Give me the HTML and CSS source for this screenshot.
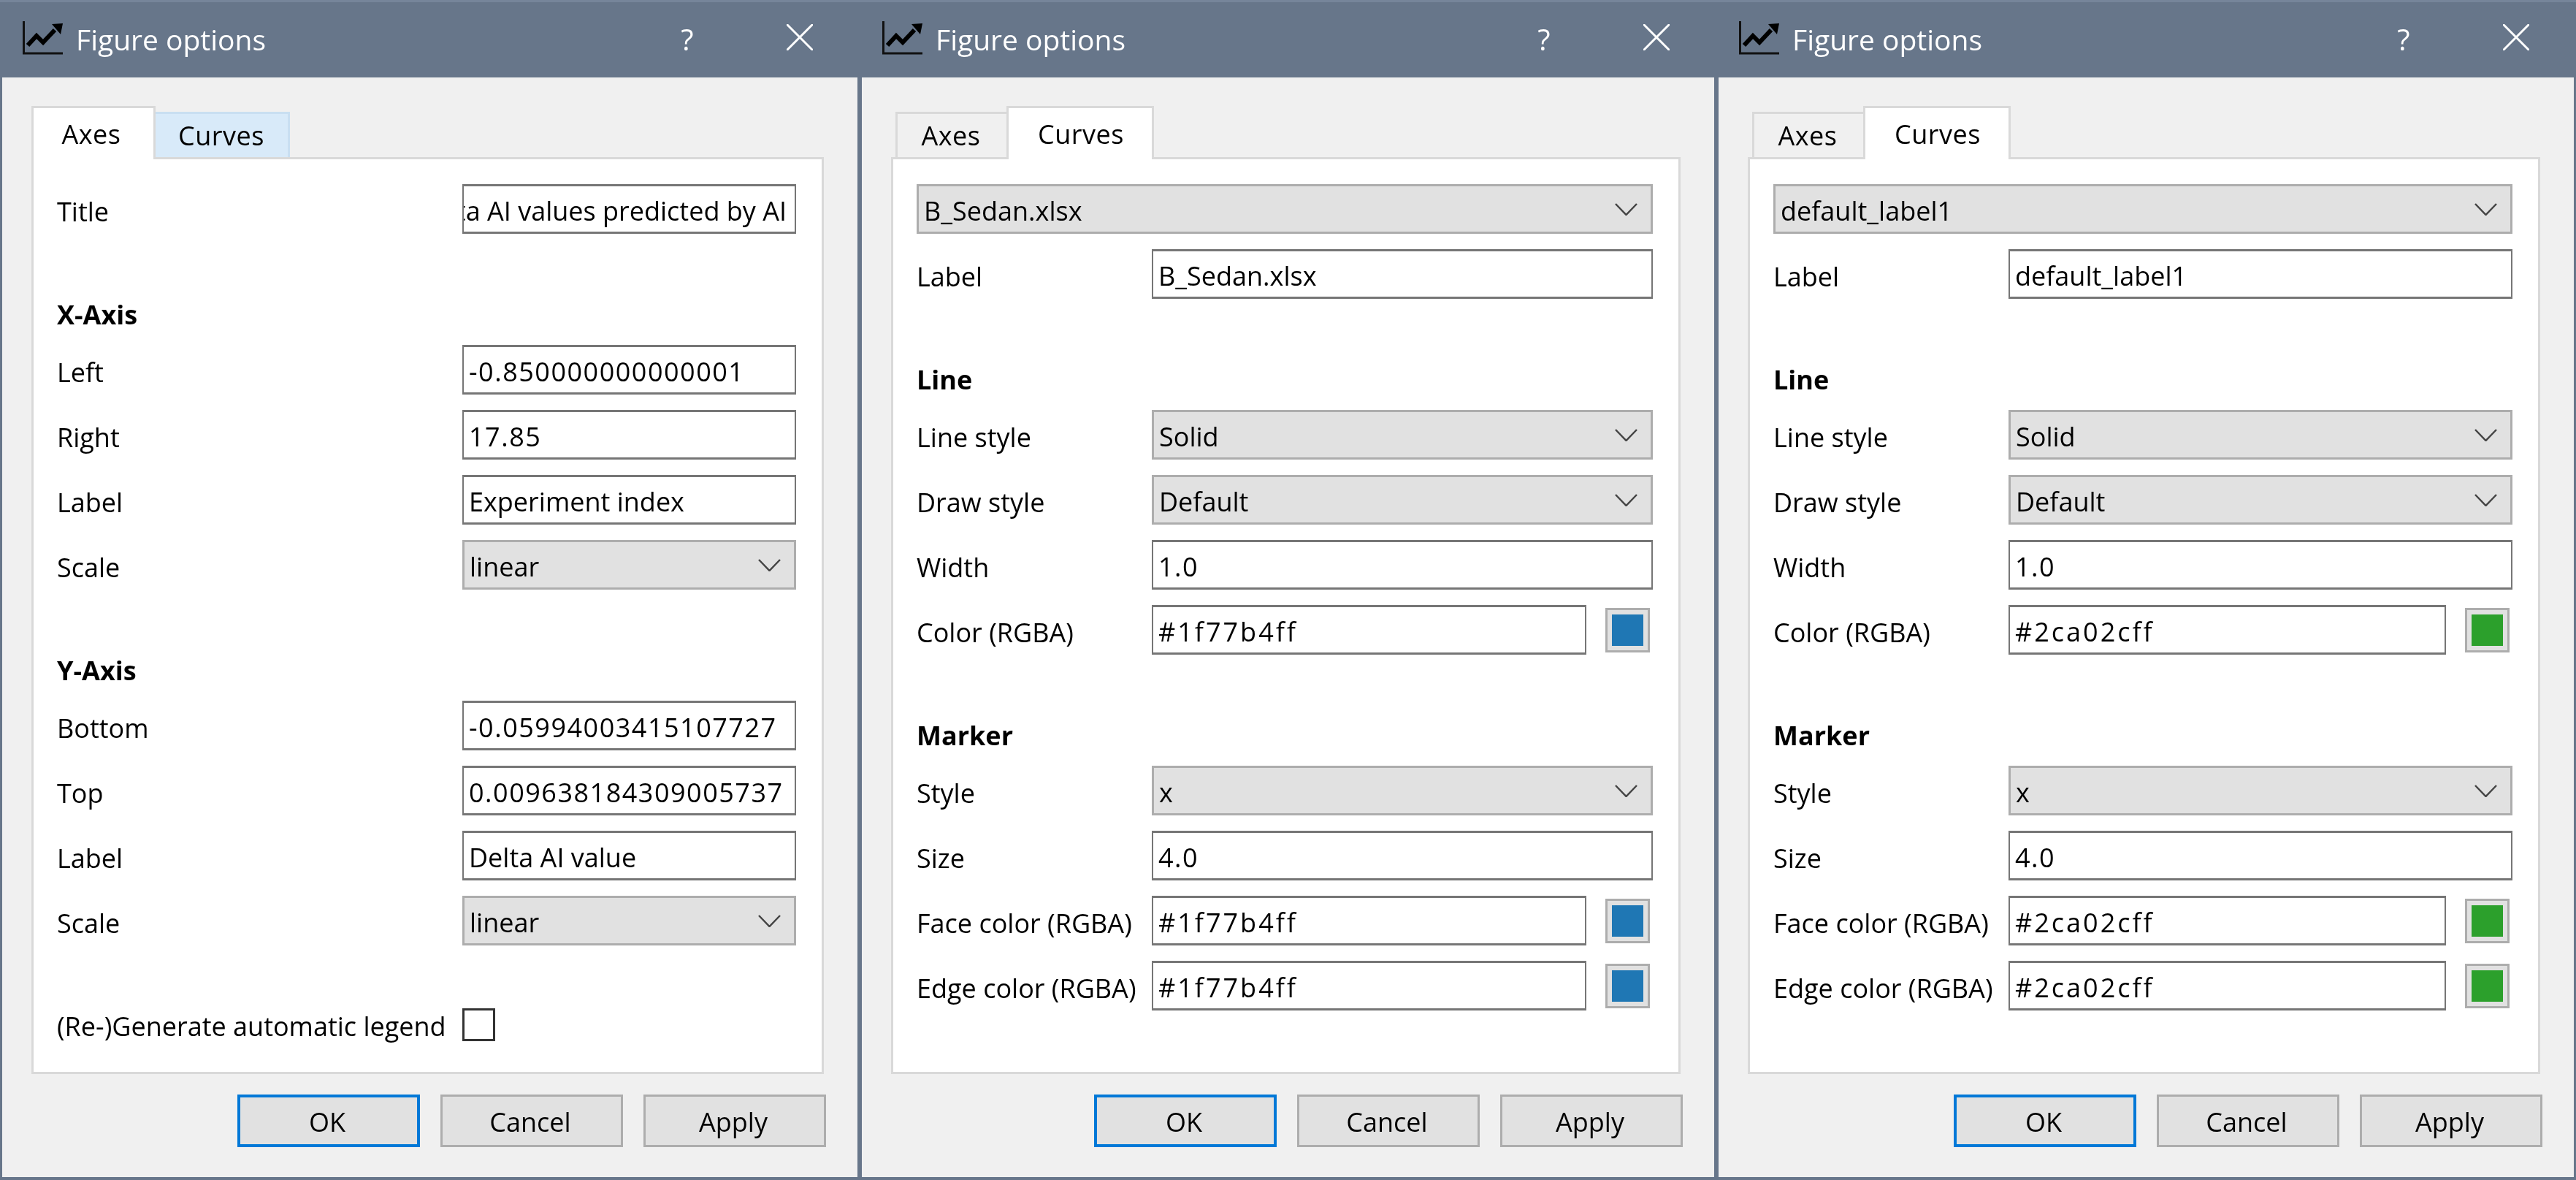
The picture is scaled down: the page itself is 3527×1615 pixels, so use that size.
FILE: index.html
```html
<!DOCTYPE html>
<html lang="en">
<head>
  <meta charset="UTF-8" />
  <title>Figure options</title>
  <link rel="stylesheet" href="styles.css">
</head>
<body>

  <div class="desktop">

    <!-- Axes tab -->
    <div class="dialog">
      <div class="titlebar">
        <svg class="app-icon" viewBox="0 0 55 46"><path class="icon-axes" d="M1.5 0V44H55"/><path class="icon-line" d="M7 33L19 20L28 29L44 12"/><path d="M40 4L55 3L52 18Z"/></svg>
        <span class="title-text">Figure options</span>
        <span class="help">?</span>
        <svg class="close" viewBox="0 0 36 36"><path d="M1 1L35 35M35 1L1 35"/></svg>
      </div>
      <div class="content">
        <div class="tabs">
          <div class="tab tab-axes active">Axes</div>
          <div class="tab tab-curves hover">Curves</div>
        </div>
        <div class="pane">
          <div class="row row-axes"><span class="label">Title</span><div class="field clipped"><span>Delta AI values predicted by AI</span></div></div>

          <div class="section">X-Axis</div>
          <div class="row row-axes"><span class="label">Left</span><div class="field num">-0.850000000000001</div></div>
          <div class="row row-axes"><span class="label">Right</span><div class="field num">17.85</div></div>
          <div class="row row-axes"><span class="label">Label</span><div class="field">Experiment index</div></div>
          <div class="row row-axes"><span class="label">Scale</span><div class="combo">linear<svg class="chevron" viewBox="0 0 31 17"><path d="M1 1L15.5 16L30 1"/></svg></div></div>

          <div class="section">Y-Axis</div>
          <div class="row row-axes"><span class="label">Bottom</span><div class="field num">-0.05994003415107727</div></div>
          <div class="row row-axes"><span class="label">Top</span><div class="field num">0.009638184309005737</div></div>
          <div class="row row-axes"><span class="label">Label</span><div class="field">Delta AI value</div></div>
          <div class="row row-axes"><span class="label">Scale</span><div class="combo">linear<svg class="chevron" viewBox="0 0 31 17"><path d="M1 1L15.5 16L30 1"/></svg></div></div>

          <div class="legend-row"><span class="legend-label">(Re-)Generate automatic legend</span><div class="checkbox"></div></div>
        </div>
        <div class="buttons">
          <div class="btn default">OK</div>
          <div class="btn">Cancel</div>
          <div class="btn">Apply</div>
        </div>
      </div>
    </div>

    <!-- Curves tab, blue line -->
    <div class="dialog">
      <div class="titlebar">
        <svg class="app-icon" viewBox="0 0 55 46"><path class="icon-axes" d="M1.5 0V44H55"/><path class="icon-line" d="M7 33L19 20L28 29L44 12"/><path d="M40 4L55 3L52 18Z"/></svg>
        <span class="title-text">Figure options</span>
        <span class="help">?</span>
        <svg class="close" viewBox="0 0 36 36"><path d="M1 1L35 35M35 1L1 35"/></svg>
      </div>
      <div class="content">
        <div class="tabs">
          <div class="tab tab-axes">Axes</div>
          <div class="tab tab-curves active">Curves</div>
        </div>
        <div class="pane">
          <div class="row"><div class="combo">B_Sedan.xlsx<svg class="chevron" viewBox="0 0 31 17"><path d="M1 1L15.5 16L30 1"/></svg></div></div>
          <div class="row"><span class="label">Label</span><div class="field">B_Sedan.xlsx</div></div>

          <div class="section">Line</div>
          <div class="row"><span class="label">Line style</span><div class="combo">Solid<svg class="chevron" viewBox="0 0 31 17"><path d="M1 1L15.5 16L30 1"/></svg></div></div>
          <div class="row"><span class="label">Draw style</span><div class="combo">Default<svg class="chevron" viewBox="0 0 31 17"><path d="M1 1L15.5 16L30 1"/></svg></div></div>
          <div class="row"><span class="label">Width</span><div class="field num">1.0</div></div>
          <div class="row"><span class="label">Color (RGBA)</span><div class="field hex">#1f77b4ff</div><div class="swatch"><i class="blue"></i></div></div>

          <div class="section">Marker</div>
          <div class="row"><span class="label">Style</span><div class="combo">x<svg class="chevron" viewBox="0 0 31 17"><path d="M1 1L15.5 16L30 1"/></svg></div></div>
          <div class="row"><span class="label">Size</span><div class="field num">4.0</div></div>
          <div class="row"><span class="label">Face color (RGBA)</span><div class="field hex">#1f77b4ff</div><div class="swatch"><i class="blue"></i></div></div>
          <div class="row"><span class="label">Edge color (RGBA)</span><div class="field hex">#1f77b4ff</div><div class="swatch"><i class="blue"></i></div></div>
        </div>
        <div class="buttons">
          <div class="btn default">OK</div>
          <div class="btn">Cancel</div>
          <div class="btn">Apply</div>
        </div>
      </div>
    </div>

    <!-- Curves tab, green line -->
    <div class="dialog">
      <div class="titlebar">
        <svg class="app-icon" viewBox="0 0 55 46"><path class="icon-axes" d="M1.5 0V44H55"/><path class="icon-line" d="M7 33L19 20L28 29L44 12"/><path d="M40 4L55 3L52 18Z"/></svg>
        <span class="title-text">Figure options</span>
        <span class="help">?</span>
        <svg class="close" viewBox="0 0 36 36"><path d="M1 1L35 35M35 1L1 35"/></svg>
      </div>
      <div class="content">
        <div class="tabs">
          <div class="tab tab-axes">Axes</div>
          <div class="tab tab-curves active">Curves</div>
        </div>
        <div class="pane">
          <div class="row"><div class="combo">default_label1<svg class="chevron" viewBox="0 0 31 17"><path d="M1 1L15.5 16L30 1"/></svg></div></div>
          <div class="row"><span class="label">Label</span><div class="field">default_label1</div></div>

          <div class="section">Line</div>
          <div class="row"><span class="label">Line style</span><div class="combo">Solid<svg class="chevron" viewBox="0 0 31 17"><path d="M1 1L15.5 16L30 1"/></svg></div></div>
          <div class="row"><span class="label">Draw style</span><div class="combo">Default<svg class="chevron" viewBox="0 0 31 17"><path d="M1 1L15.5 16L30 1"/></svg></div></div>
          <div class="row"><span class="label">Width</span><div class="field num">1.0</div></div>
          <div class="row"><span class="label">Color (RGBA)</span><div class="field hex">#2ca02cff</div><div class="swatch"><i class="green"></i></div></div>

          <div class="section">Marker</div>
          <div class="row"><span class="label">Style</span><div class="combo">x<svg class="chevron" viewBox="0 0 31 17"><path d="M1 1L15.5 16L30 1"/></svg></div></div>
          <div class="row"><span class="label">Size</span><div class="field num">4.0</div></div>
          <div class="row"><span class="label">Face color (RGBA)</span><div class="field hex">#2ca02cff</div><div class="swatch"><i class="green"></i></div></div>
          <div class="row"><span class="label">Edge color (RGBA)</span><div class="field hex">#2ca02cff</div><div class="swatch"><i class="green"></i></div></div>
        </div>
        <div class="buttons">
          <div class="btn default">OK</div>
          <div class="btn">Cancel</div>
          <div class="btn">Apply</div>
        </div>
      </div>
    </div>

  </div>

</body>
</html>
```

FILE: styles.css
```css
* {
  box-sizing: border-box;
}

body {
  margin: 0;
  background: #67768a;
  font-family: 'Open Sans', 'Noto Sans', sans-serif;
  font-size: 36px;
  color: #000;
  overflow: hidden;
}

.desktop {
  display: grid;
  grid-template-columns: 1177px 1173px 1177px;
  height: 1615px;
  filter: blur(0.6px);
}

.dialog {
  display: flex;
  flex-direction: column;
  background: #67768a;
  padding: 0 3px 4px 3px;
}

.titlebar {
  display: flex;
  align-items: center;
  height: 106px;
  flex: none;
  margin: 0 -3px;
  padding-left: 31px;
  border-top: 3px solid #76859a;
  color: #fff;
}

.app-icon {
  width: 55px;
  height: 46px;
  margin-top: -5px;
  margin-right: 18px;
  flex: none;
}

.icon-axes {
  fill: none;
  stroke: #111;
  stroke-width: 3;
}

.icon-line {
  fill: none;
  stroke: #000;
  stroke-width: 6;
}

.title-text {
  font-size: 39px;
  margin-top: -3px;
  flex: 1;
}

.help {
  font-size: 40px;
  width: 36px;
  text-align: center;
  margin-right: 118px;
  margin-top: -2px;
}

.close {
  width: 36px;
  height: 36px;
  margin-right: 64px;
  margin-top: -8px;
  fill: none;
  stroke: #fff;
  stroke-width: 3;
  stroke-linecap: round;
}

.content {
  flex: 1;
  background: #f0f0f0;
  padding: 39px 42px 0 40px;
  display: flex;
  flex-direction: column;
}

.tabs {
  display: flex;
  align-items: flex-end;
  height: 70px;
  padding-left: 6px;
  margin-right: 4px;
}

.tab {
  height: 62px;
  display: flex;
  align-items: center;
  justify-content: center;
  background: #f0f0f0;
  border: 3px solid #d9d9d9;
  border-bottom: none;
}

.tab-axes {
  width: 158px;
  padding-right: 6px;
  letter-spacing: 0.5px;
}

.tab-curves {
  width: 190px;
  padding-left: 2px;
  letter-spacing: 0.5px;
}

.tab.hover {
  background: #d8eaf9;
  border-color: #c9dff1;
}

.tab.active {
  position: relative;
  z-index: 1;
  height: 73px;
  margin: 0 -6px -3px;
  background: #fff;
}

.tab-axes.active {
  width: 170px;
}

.tab-curves.active {
  width: 202px;
}

.pane {
  height: 1255px;
  margin-right: 4px;
  background: #fff;
  border: 3px solid #d9d9d9;
  padding: 34px 35px 0 32px;
  display: flex;
  flex-direction: column;
}

.row {
  display: flex;
  align-items: center;
  height: 68px;
  flex: none;
}

.row + .row {
  margin-top: 21px;
}

.label {
  width: 322px;
  flex: none;
  padding-top: 6px;
  white-space: nowrap;
}

.row-axes .label {
  width: 555px;
}

.section {
  font-weight: bold;
  line-height: 48px;
  margin: 87px 0 17px;
}

.field,
.combo {
  flex: 1;
  min-width: 0;
  height: 68px;
  display: flex;
  align-items: center;
  padding: 4px 6px 0 7px;
  white-space: nowrap;
  overflow: hidden;
}

.field {
  background: #fff;
  border: 3px solid #767676;
  border-width: 3px 2px 3px 2px;
}

.num {
  letter-spacing: 1.5px;
}

.hex {
  letter-spacing: 3px;
}

.clipped {
  justify-content: flex-end;
  padding-right: 11px;
}

.clipped span {
  flex: none;
}

.combo {
  background: #e1e1e1;
  border: 3px solid #adadad;
}

.chevron {
  width: 31px;
  height: 17px;
  margin-left: auto;
  margin-right: 12px;
  margin-top: -4px;
  flex: none;
  fill: none;
  stroke: #444;
  stroke-width: 2.5;
}

.swatch {
  width: 61px;
  height: 61px;
  flex: none;
  margin: 0 4px 0 26px;
  background: #e1e1e1;
  border: 3px solid #adadad;
  padding: 6px;
  display: flex;
}

.swatch i {
  flex: 1;
}

.blue {
  background: #1f77b4;
}

.green {
  background: #2ca02c;
}

.legend-row {
  display: flex;
  align-items: center;
  margin-top: 86px;
  height: 45px;
}

.legend-label {
  width: 555px;
  flex: none;
  padding-top: 3px;
  white-space: nowrap;
}

.checkbox {
  width: 45px;
  height: 45px;
  background: #fff;
  border: 3px solid #333;
}

.buttons {
  display: flex;
  justify-content: flex-end;
  gap: 28px;
  margin-top: 28px;
  margin-right: 1px;
}

.btn {
  width: 250px;
  height: 72px;
  padding: 2px 4px 0 0;
  display: flex;
  align-items: center;
  justify-content: center;
  background: #e1e1e1;
  border: 3px solid #adadad;
}

.btn.default {
  border: 4px solid #0078d7;
}
```
